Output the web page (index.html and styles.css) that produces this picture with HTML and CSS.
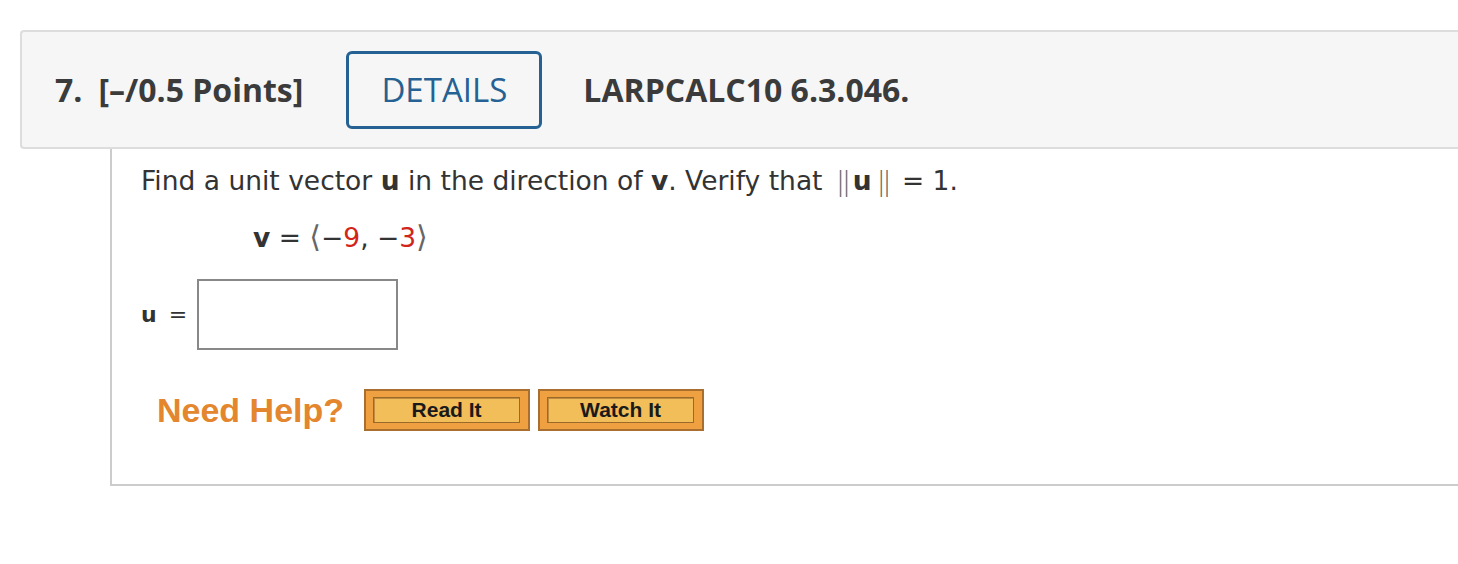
FILE: index.html
```html
<!DOCTYPE html>
<html>
<head>
<meta charset="utf-8">
<link rel="stylesheet" href="styles.css">
</head>
<body>
<div class="page">
  <div class="header">
    <span class="qnum">7.</span>
    <span class="points">[–/0.5 Points]</span>
    <span class="details">DETAILS</span>
    <span class="ref">LARPCALC10 6.3.046.</span>
  </div>
  <div class="question">
    <p class="prompt">Find a unit vector <b>u</b> in the direction of <b>v</b>. Verify that <span class="norm"><span class="bar">||</span><b>u</b><span class="bar">||</span></span> = 1.</p>
    <p class="given"><b>v</b> = <span class="ang">⟨</span>−<span class="red">9</span>, −<span class="red">3</span><span class="ang">⟩</span></p>
    <div class="answer">
      <span class="lbl"><b>u</b><span class="eq">=</span></span>
      <span class="box"></span>
    </div>
    <div class="help">
      <span class="need">Need Help?</span>
      <span class="btn"><span class="btn-in">Read It</span></span>
      <span class="btn"><span class="btn-in">Watch It</span></span>
    </div>
  </div>
</div>
</body>
</html>
```
FILE: styles.css
```css
html, body {
  margin: 0;
  background: #fff;
}
.page {
  padding-top: 30px;
  padding-left: 20px;
}
.header {
  height: 115px;
  background: #f6f6f6;
  border: 2px solid #ddd;
  border-right: none;
  border-radius: 4px 0 0 4px;
  display: flex;
  align-items: center;
  padding-left: 33px;
  font-family: "Open Sans", sans-serif;
  color: #3b3b3b;
  font-weight: 700;
  font-size: 32px;
}
.qnum {
  margin-right: 16px;
}
.details {
  margin-left: 43px;
  width: 190px;
  height: 72px;
  border: 3px solid #256192;
  border-radius: 6px;
  display: flex;
  align-items: center;
  justify-content: center;
  font-weight: 400;
  color: #256192;
  font-size: 33px;
}
.ref {
  margin-left: 41px;
}
.question {
  margin-left: 90px;
  height: 335px;
  border-left: 2px solid #ccc;
  border-bottom: 2px solid #ccc;
  padding-left: 29px;
  font-family: "DejaVu Sans", Verdana, sans-serif;
  color: #333;
  font-size: 26.5px;
  overflow: hidden;
}
.prompt {
  margin: 0;
  padding-top: 16px;
  line-height: 32px;
}
.norm .bar {
  font-weight: 300;
  color: #666;
  letter-spacing: -3px;
  margin: 0 5px;
}
.given {
  margin: 0;
  padding-top: 24px;
  padding-left: 112px;
  line-height: 32px;
}
.ang {
  color: #666;
  font-size: 30px;
}
.red {
  color: #d2251a;
}
.answer {
  display: flex;
  align-items: center;
  margin-top: 25px;
}
.lbl {
  margin-right: 10px;
  font-size: 22px;
}
.eq {
  margin-left: 12px;
}
.box {
  display: block;
  width: 197px;
  height: 67px;
  border: 2px solid #888;
  background: #fff;
}
.help {
  display: flex;
  align-items: center;
  margin-top: 39px;
  padding-left: 16px;
}
.need {
  font-family: "Liberation Sans", Arial, sans-serif;
  color: #e3862e;
  font-size: 34px;
  font-weight: 700;
  margin-right: 20px;
}
.btn {
  display: flex;
  width: 166px;
  height: 42px;
  background: #efa040;
  border: 2px solid #a86f30;
  margin-right: 8px;
  padding: 6px 8px 6px 7px;
  box-sizing: border-box;
}
.btn-in {
  flex: 1;
  display: flex;
  align-items: center;
  justify-content: center;
  background: #f2be5a;
  border: 1px solid #9a6a2a;
  box-shadow: inset 1px 1px 0 #c08a40;
  font-family: "Liberation Sans", Arial, sans-serif;
  font-weight: 700;
  font-size: 21px;
  color: #1a1a1a;
}
```
